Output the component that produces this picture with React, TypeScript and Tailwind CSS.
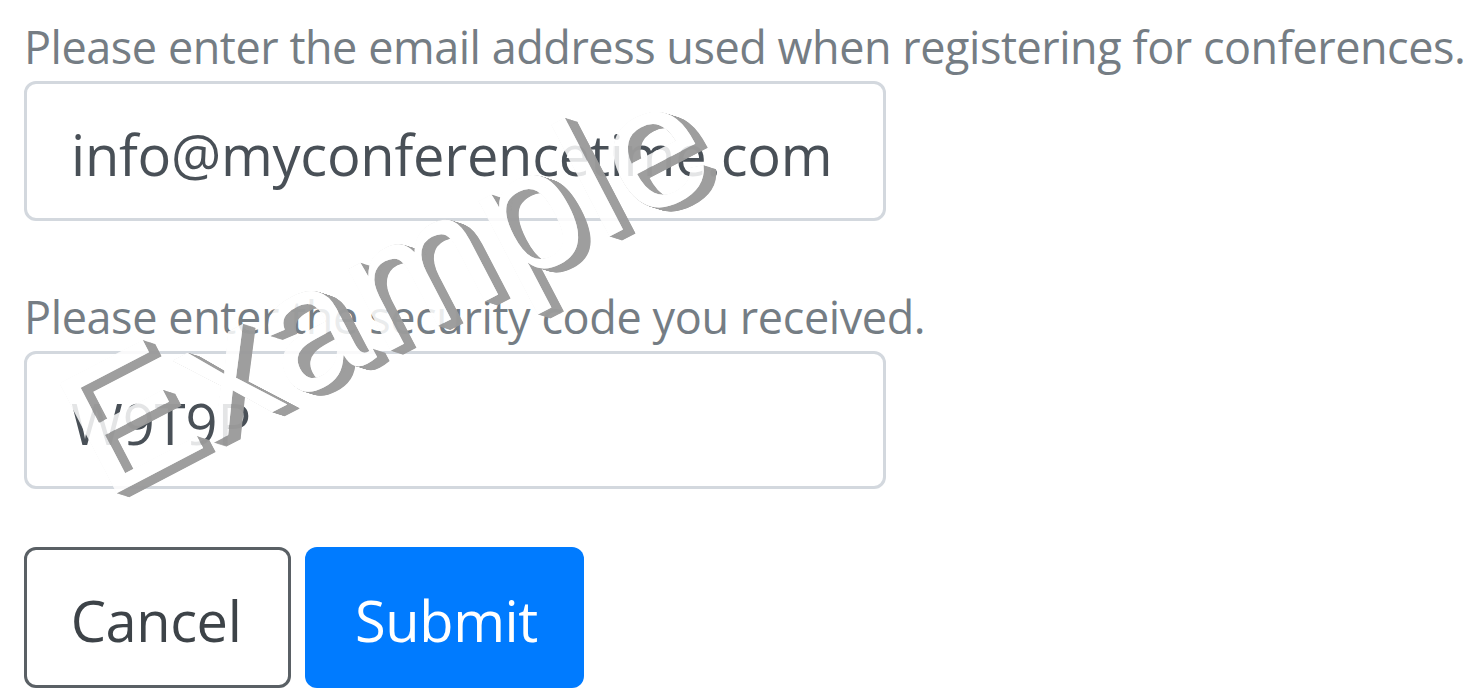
import { useState } from 'react';

// Steps of the extruded side, from the face (0, 0) to its far end (12.5, 4)
const DEPTH = Array.from({ length: 26 }, (_, i) => (i + 1) / 26);

function Watermark() {
  return (
    <svg className="pointer-events-none absolute left-0 top-0" width="900" height="540" aria-hidden="true">
      <defs>
        <g id="word" transform="translate(103.5 500)">
          <text
            transform="rotate(-27.5)"
            className='font-["Liberation_Sans",sans-serif] text-[174px] tracking-[2.8px]'
          >
            <tspan className="text-[180px] tracking-[2px]">E</tspan>
            <tspan>xample</tspan>
          </text>
        </g>
        <mask id="face" maskUnits="userSpaceOnUse" x="0" y="0" width="900" height="540">
          <rect width="900" height="540" fill="white" />
          <use href="#word" fill="black" />
        </mask>
      </defs>
      <g mask="url(#face)" fill="#9b9b9b" opacity="0.97">
        {DEPTH.map((t) => (
          <use key={t} href="#word" x={12.5 * t} y={4 * t} />
        ))}
      </g>
      <use href="#word" fill="white" fillOpacity="0.85" />
    </svg>
  );
}

export default function App() {
  const [email, setEmail] = useState('info@myconferencetime.com');
  const [code, setCode] = useState('W9T9P');

  return (
    <form
      onSubmit={(e) => e.preventDefault()}
      className='relative h-[693px] w-[1475px] overflow-hidden bg-white pl-6 pt-[15px] font-["Open_Sans","Noto_Sans",sans-serif]'
    >
      <label htmlFor="email" className="block h-[66px] whitespace-nowrap text-[45px] leading-[64px] tracking-[-0.46px] text-[#757d84]">
        Please enter the email address used when registering for conferences.
      </label>
      <input
        id="email"
        value={email}
        onChange={(e) => setEmail(e.target.value)}
        className="block h-[140px] w-[862px] rounded-xl border-[3px] border-[#d3d8de] px-11 pt-1.5 text-[56px] tracking-[-0.25px] text-[#495057] outline-none"
      />
      <label htmlFor="code" className="mt-16 block h-[66px] whitespace-nowrap text-[45px] leading-[64px] tracking-[-0.4px] text-[#757d84]">
        Please enter the security code you received.
      </label>
      <input
        id="code"
        value={code}
        onChange={(e) => setCode(e.target.value)}
        className="block h-[138px] w-[862px] rounded-xl border-[3px] border-[#d3d8de] px-11 pt-1.5 text-[56px] text-[#495057] outline-none"
      />
      <div className="mt-[58px] flex gap-[14px]">
        <button type="button" className="h-[141px] w-[267px] rounded-xl border-[3px] border-[#5a6065] pr-[3px] pt-1 text-[56px] tracking-[-0.4px] text-[#3d4348]">
          Cancel
        </button>
        <button type="submit" className="h-[141px] w-[279px] rounded-xl bg-[#007bff] pl-1 pt-1 text-[56px] tracking-[-0.4px] text-white">
          Submit
        </button>
      </div>
      <Watermark />
    </form>
  );
}
